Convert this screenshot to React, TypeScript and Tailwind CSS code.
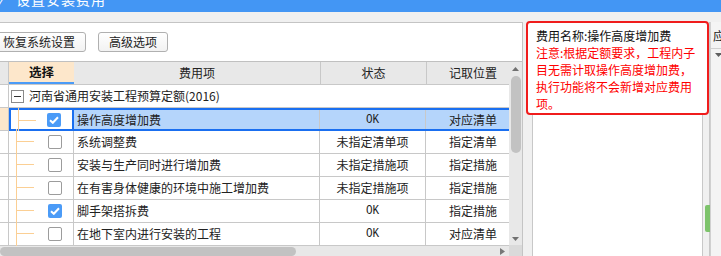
import React from "react";

type Row = {
  name: string;
  checked: boolean;
  status: string;
  place: string;
};

const rows: Row[] = [
  { name: "操作高度增加费", checked: true, status: "OK", place: "对应清单" },
  { name: "系统调整费", checked: false, status: "未指定清单项", place: "指定清单" },
  { name: "安装与生产同时进行增加费", checked: false, status: "未指定措施项", place: "指定措施" },
  { name: "在有害身体健康的环境中施工增加费", checked: false, status: "未指定措施项", place: "指定措施" },
  { name: "脚手架搭拆费", checked: true, status: "OK", place: "指定措施" },
  { name: "在地下室内进行安装的工程", checked: false, status: "OK", place: "对应清单" },
];

const font = "font-['Noto_Sans_CJK_SC','Noto_Sans',sans-serif]";

const CheckBox = ({ checked }: { checked: boolean }) =>
  checked ? (
    <div className="w-[14px] h-[14px] rounded-[2px] bg-[#4b9bf7] flex items-center justify-center">
      <svg width="10" height="8" viewBox="0 0 10 8">
        <path d="M1 4.2 L3.8 6.8 L9 1.2" stroke="white" strokeWidth="2" fill="none" />
      </svg>
    </div>
  ) : (
    <div className="w-[14px] h-[14px] rounded-[2px] border border-[#9c9c9c] bg-white" />
  );

const StatusText = ({ text }: { text: string }) =>
  text === "OK" ? (
    <span className="font-['Liberation_Mono',monospace] text-[11px] leading-[12px] scale-y-110">OK</span>
  ) : (
    <span>{text}</span>
  );

export default function App() {
  return (
    <div className={`w-[721px] h-[256px] overflow-hidden flex flex-col bg-[#f0f0f0] text-[12px] text-[#222] ${font} relative`}>
      {/* title bar, cut off at the top */}
      <div className="h-[12px] bg-[#4396f4] overflow-hidden flex items-start shrink-0">
        <span className="text-white text-[14px] leading-[20px] mt-[-11px] pl-[1px] w-[10px]">⁄</span>
        <span className="text-white text-[14px] leading-[20px] mt-[-11px] ml-[6px] tracking-[1px]">设置安装费用</span>
      </div>

      <div className="flex flex-1 pt-[10px] min-h-0">
        {/* left panel */}
        <div className="w-[523px] flex flex-col bg-white border-t border-r border-[#c4c4c4] min-h-0">
          <div className="h-[38px] flex items-start pt-[9px] gap-[12px] ml-[-8px] shrink-0">
            <button className="h-[20px] px-[10px] rounded-[3px] border border-[#b0b0b0] bg-gradient-to-b from-white to-[#f2f2f2] leading-[18px] text-[12px]">
              恢复系统设置
            </button>
            <button className="h-[20px] px-[10px] rounded-[3px] border border-[#b0b0b0] bg-gradient-to-b from-white to-[#f2f2f2] leading-[18px] text-[12px]">
              高级选项
            </button>
          </div>

          <div className="flex flex-1 min-h-0 border-t border-[#c0c0c0]">
            <div className="w-[509px] flex flex-col">
              {/* header */}
              <div className="flex h-[23px] bg-[#e8e8e8] border-b border-[#c8c8c8] shrink-0">
                <div className="w-[9px] border-r border-[#c8c8c8]" />
                <div className="w-[65px] bg-[#fde7cb] border-b-2 border-[#4b9bf7] flex items-center justify-center font-bold text-[12.5px] text-[#111]">
                  选择
                </div>
                <div className="w-[247px] border-r border-[#c8c8c8] flex items-center justify-center">费用项</div>
                <div className="w-[106px] border-r border-[#c8c8c8] flex items-center justify-center">状态</div>
                <div className="w-[82px] flex items-center justify-end pr-[12px]">记取位置</div>
              </div>

              {/* group row */}
              <div className="flex h-[23px] border-b border-[#c8c8c8] shrink-0">
                <div className="w-[9px] border-r border-[#c8c8c8]" />
                <div className="flex items-center pl-[2px]">
                  <div className="w-[13px] h-[13px] border border-[#8a8a8a] flex items-center justify-center">
                    <div className="w-[7px] h-[1px] bg-[#333]" />
                  </div>
                  <span className="ml-[5px] whitespace-nowrap">河南省通用安装工程预算定额(2016)</span>
                </div>
              </div>

              {rows.map((row, i) => {
                const selected = i === 0;
                return (
                  <div key={i} className="flex h-[23px] shrink-0">
                    <div
                      className={`w-[9px] border-r border-b border-[#c8c8c8] ${selected ? "bg-[#fde7cb]" : ""}`}
                    />
                    <div
                      className={`w-[65px] relative flex items-center justify-end pr-[11px] ${
                        selected ? "border-2 border-[#1a6ff0]" : "border-b border-r border-[#c8c8c8]"
                      }`}
                    >
                      <div className="absolute left-[7px] top-[-2px] bottom-[-2px] w-[1px] bg-[#fbcf94]" />
                      <div className="absolute left-[7px] top-[10px] w-[18px] h-[1px] bg-[#fbcf94]" />
                      <CheckBox checked={row.checked} />
                    </div>
                    <div
                      className={`flex flex-1 ${
                        selected ? "bg-[#b5d5fb] border-y-2 border-[#1a6ff0]" : "border-b border-[#c8c8c8]"
                      }`}
                    >
                      <div className="w-[246px] border-r border-[#c8c8c8] flex items-center pl-[3px] whitespace-nowrap overflow-hidden">
                        {row.name}
                      </div>
                      <div className="w-[106px] border-r border-[#c8c8c8] flex items-center justify-center">
                        <StatusText text={row.status} />
                      </div>
                      <div className="flex-1 flex items-center justify-end pr-[12px]">{row.place}</div>
                    </div>
                  </div>
                );
              })}

              {/* horizontal scrollbar */}
              <div className="h-[11px] bg-[#e8e8e8] flex items-center relative shrink-0 mt-auto">
                <div className="h-[9px] w-[296px] bg-[#c2c2c2] rounded-full" />
                <svg className="absolute right-[4px] top-[2px]" width="5" height="7" viewBox="0 0 5 7">
                  <path d="M0 0 L5 3.5 L0 7 Z" fill="#777" />
                </svg>
              </div>
            </div>

            {/* vertical scrollbar */}
            <div className="w-[13px] flex flex-col bg-[#e8e8e8]">
              <div className="flex-1 relative flex flex-col items-center">
                <svg className="mt-[5px]" width="7" height="4" viewBox="0 0 7 4">
                  <path d="M0 4 L3.5 0 L7 4 Z" fill="#707070" />
                </svg>
                <div className="mt-[5px] w-[10px] h-[77px] bg-[#c2c2c2] rounded-full" />
                <svg className="mt-auto mb-[4px]" width="7" height="4" viewBox="0 0 7 4">
                  <path d="M0 0 L3.5 4 L7 0 Z" fill="#707070" />
                </svg>
              </div>
              <div className="h-[11px] bg-[#dadada]" />
            </div>
          </div>
        </div>

        {/* right side panels */}
        <div className="flex flex-1 pl-[9px]">
          <div className="w-[171px] bg-white border-l border-r border-[#c8c8c8]" />
          <div className="w-[7px] border-r border-[#c8c8c8] relative">
            <div className="absolute left-[2px] top-[183px] w-[5px] h-[27px] bg-[#7dc36b] rounded-l-[2px]" />
          </div>
          <div className="flex-1 flex flex-col bg-[#f4f4f4] border-l border-[#d0d0d0] overflow-hidden">
            <div className="h-[26px] pt-[7px] pl-[2px] leading-[14px] whitespace-nowrap">应</div>
            <div className="border-t border-[#d0d0d0] flex-1 pt-[4px] pl-[4px]">
              <svg width="7" height="4" viewBox="0 0 7 4">
                <path d="M0 0 L3.5 4 L7 0 Z" fill="#606060" />
              </svg>
            </div>
          </div>
        </div>
      </div>

      {/* tooltip */}
      <div className="absolute left-[526px] top-[21px] w-[183px] h-[94px] border-2 border-[#f01c1c] rounded-[4px] bg-white pl-[8px] pt-[4px]">
        <div className="w-[164px] leading-[17px]">
          <div className="text-[#111] whitespace-nowrap">费用名称:操作高度增加费</div>
          <div className="text-[#ff0000]">注意:根据定额要求，工程内子目无需计取操作高度增加费，执行功能将不会新增对应费用项。</div>
        </div>
      </div>
    </div>
  );
}
